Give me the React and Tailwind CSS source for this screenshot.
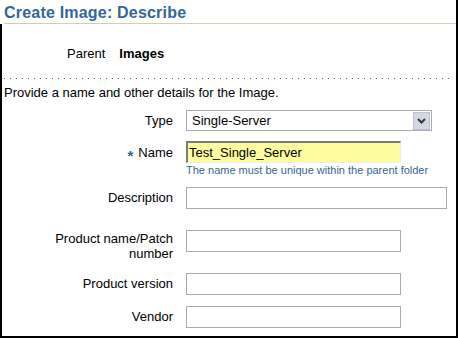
const labelCls = 'w-[171px] shrink-0 text-right text-[13px] leading-[16px] text-black';
const boxCls = 'h-[22px] border border-[#a5acb2] bg-white';

function Row({ label, className = '', children }) {
  return (
    <div className={`flex items-center gap-[13px] ${className}`}>
      <div className={labelCls}>{label}</div>
      {children}
    </div>
  );
}

export default function App() {
  return (
    <div className="w-[458px] h-[338px] flex flex-col bg-white border-r-2 border-black font-['Liberation_Sans',Arial,sans-serif] text-black">
      {/* Header */}
      <div className="h-[23px] pt-[4px] pl-[4px] text-[16px] leading-[18px] font-bold tracking-[0.2px] text-[#336699]">
        Create Image: Describe
      </div>
      <div className="ml-[4px] h-px bg-[#cfcfb4]" />

      {/* Body */}
      <div className="flex-1 flex flex-col border-l-2 border-b-2 border-black">
        <div className="mt-[22px] pl-[65px] flex gap-[14px] text-[13px] leading-[16px]">
          <span>Parent</span>
          <span className="font-bold">Images</span>
        </div>

        <div className="mt-4 ml-[2px] mr-[2px] h-px bg-[linear-gradient(90deg,#336699_1px,transparent_1px)] bg-[length:6px_1px]" />

        <p className="mt-[6px] pl-[2px] text-[13px] leading-[16px]">
          Provide a name and other details for the Image.
        </p>

        <Row label="Type" className="mt-[9px]">
          <div className="w-[246px] h-[21px] flex items-center justify-between border border-[#a5acb2] bg-white">
            <span className="pl-[5px] text-[13px] leading-[16px]">Single-Server</span>
            <div className="w-[17px] h-[18px] mr-px flex items-center justify-center bg-[#d4d8e4] border border-[#bcc2d0]">
              <svg width="9" height="6" viewBox="0 0 9 6">
                <path d="M1 1 L4.5 4.5 L8 1" fill="none" stroke="#333" strokeWidth="2" />
              </svg>
            </div>
          </div>
        </Row>

        <div className="mt-[10px] flex items-center gap-[13px]">
          <div className={labelCls}>
            <span className="relative top-[4px] mr-[5px] text-[15px] font-bold leading-none text-[#336699]">*</span>
            Name
          </div>
          <div className="w-[215px] h-[22px] flex items-center pl-px bg-[#fdfd9f] border-t-2 border-l-2 border-t-[#7a7a7a] border-l-[#7a7a7a] border-r border-b border-r-[#ececec] border-b-[#ececec] text-[13px] leading-[16px]">
            Test_Single_Server
          </div>
        </div>
        <p className="mt-px ml-[184px] text-[11px] leading-[13px] text-[#336699]">
          The name must be unique within the parent folder
        </p>

        <Row label="Description" className="mt-[10px]">
          <div className={`w-[261px] ${boxCls}`} />
        </Row>

        <div className="mt-[21px] flex items-start gap-[13px]">
          <div className="w-[171px] shrink-0 mt-px text-right text-[13px] leading-[15px]">
            Product name/Patch
            <br />
            number
          </div>
          <div className={`w-[215px] ${boxCls}`} />
        </div>

        <Row label="Product version" className="mt-[12px]">
          <div className={`w-[215px] ${boxCls}`} />
        </Row>

        <Row label="Vendor" className="mt-[11px]">
          <div className={`w-[215px] ${boxCls}`} />
        </Row>
      </div>
    </div>
  );
}
